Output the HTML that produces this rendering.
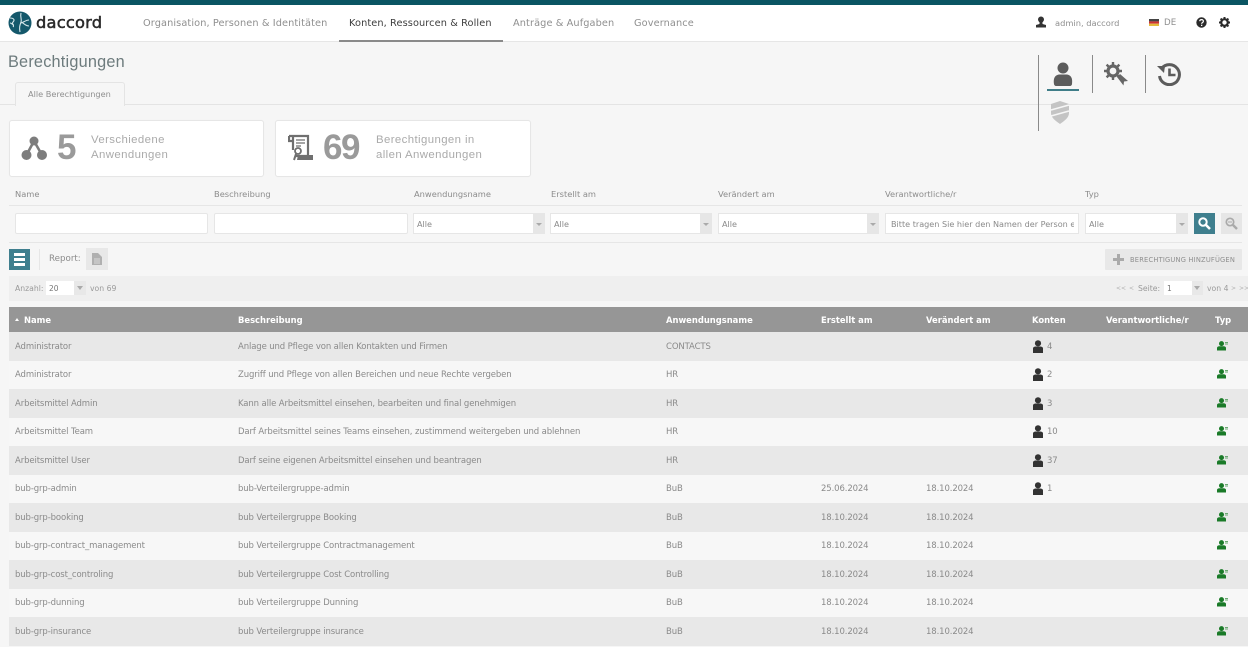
<!DOCTYPE html>
<html lang="de"><head><meta charset="utf-8"><title>Berechtigungen</title>
<style>
html,body{margin:0;padding:0}
body{width:1248px;height:647px;overflow:hidden;position:relative;background:#f6f6f6;font-family:"DejaVu Sans",sans-serif;color:#8a8a8a;font-size:9px}
.a,.t{position:absolute;white-space:nowrap}
.t{line-height:12px;transform:translateY(-5px)}
.nav{font-size:9.75px;color:#8f8f8f;letter-spacing:.1px}
.lbl{font-size:8.3px;color:#8c8c8c;top:193px}
.inp{position:absolute;top:213px;height:19px;background:#fff;border:1px solid #e6e6e6;border-radius:2px}
.sel{position:absolute;top:213px;height:21px;background:#fff;box-sizing:border-box;border:1px solid #e6e6e6;font-size:8.1px;color:#8a8a8a;line-height:21px;padding-left:3px}
.sel i{position:absolute;right:0;top:0;bottom:0;width:11px;background:#e6e6e6}
.sel i:after{content:"";position:absolute;left:3px;top:9px;border:3px solid transparent;border-top:3px solid #aaa}
.row{position:absolute;left:9px;width:1239px;height:28.5px}
.o{background:#e8e8e8}.e{background:#f7f7f7}
.c{font-size:8.5px;letter-spacing:-.12px;color:#8a8a8a}
.th{font-size:8.4px;font-weight:bold;color:#fff;top:319px}
.card{position:absolute;top:120px;height:55px;background:#fff;border:1px solid #e6e6e6;border-radius:3px;box-shadow:0 0 1px #eee}
.big{font-family:"Liberation Sans",sans-serif;font-weight:bold;font-size:35px;letter-spacing:-1.5px;color:#9a9a9a;line-height:40px}
.cap{font-family:"Liberation Sans",sans-serif;font-size:11.4px;color:#aaa;line-height:15px;letter-spacing:.4px}
.sep{position:absolute;width:1px;background:#8a8a8a}
.pg{font-size:7.7px;color:#9a9a9a;top:288px}
.ar{font-size:6px;color:#b0b0b0;top:288px}
</style></head><body>

<div class="a" style="left:0;top:0;width:1248px;height:5px;background:#0a5563"></div>
<div class="a" style="left:0;top:5px;width:1248px;height:36px;background:#fff"></div>
<div class="a" style="left:0;top:41px;width:1248px;height:1px;background:#e6e6e6"></div>

<svg class="a" style="left:8px;top:11px" width="24" height="24" viewBox="0 0 24 24"><circle cx="12" cy="12" r="11.500" fill="#14586b"/><path d="M2 7c4 0 5 2 3 4s2 3 0 5M2 12c2 0 2 2 4 2M13 2c-1 4 1 6 0 9s-2 5-1 10M13 12c3-1 5-3 8-3M13 11c3 1 4 4 8 4" fill="none" stroke="#d5e6ea" stroke-width="1.100"/></svg>
<div class="t" style="left:36px;top:23px;font-size:16.300px;line-height:22px;transform:translateY(-11px);color:#2a2a2a;letter-spacing:.2px;-webkit-text-stroke:.5px #2a2a2a">daccord</div>

<div class="t nav" style="left:143px;top:23px">Organisation, Personen &amp; Identitäten</div>
<div class="t nav" style="left:349px;top:23px;color:#3d3d3d">Konten, Ressourcen &amp; Rollen</div>
<div class="a" style="left:339px;top:40px;width:164px;height:2px;background:#8a8a8a"></div>
<div class="t nav" style="left:513px;top:23px">Anträge &amp; Aufgaben</div>
<div class="t nav" style="left:634px;top:23px">Governance</div>

<svg class="a" style="left:1035px;top:16px" width="12" height="12" viewBox="0 0 12 12"><circle cx="6" cy="3.500" r="3" fill="#333"/><path d="M4.500 6h3v2l3.500 1v2.500H1V9l3.500-1z" fill="#333"/></svg>
<div class="t" style="left:1055px;top:22px;font-size:8.300px;color:#8f8f8f">admin, daccord</div>
<svg class="a" style="left:1149px;top:19px" width="10" height="7" viewBox="0 0 10 7"><rect width="10" height="2.400" fill="#444"/><rect y="2.400" width="10" height="2.300" fill="#c33"/><rect y="4.700" width="10" height="2.300" fill="#e3b93c"/></svg>
<div class="t" style="left:1164px;top:22px;font-size:8.700px;color:#8f8f8f">DE</div>
<svg class="a" style="left:1196px;top:17px" width="11" height="11" viewBox="0 0 11 11"><circle cx="5.500" cy="5.500" r="5.200" fill="#2b2b2b"/><path d="M3.700 4.200c.2-2.200 3.800-2 3.700.1 0 1.300-1.800 1.300-1.800 2.400" fill="none" stroke="#fff" stroke-width="1.200"/><rect x="5" y="7.700" width="1.300" height="1.300" fill="#fff"/></svg>
<svg class="a" style="left:1219px;top:17px" width="11" height="11" viewBox="0 0 11 11"><circle cx="5.500" cy="5.500" r="3.300" fill="none" stroke="#2b2b2b" stroke-width="2.200"/><g stroke="#2b2b2b" stroke-width="2"><path d="M5.500 0v2M5.500 9v2M0 5.500h2M9 5.500h2M1.600 1.600l1.400 1.400M8 8l1.400 1.400M9.400 1.600L8 3M3 8L1.600 9.400"/></g></svg>

<div class="t" style="left:8px;top:62px;font-family:'Liberation Sans',sans-serif;font-size:16.300px;line-height:20px;transform:translateY(-10px);color:#6d7b7d;letter-spacing:.2px">Berechtigungen</div>

<div class="a" style="left:0;top:104px;width:1248px;height:1px;background:#e4e4e4"></div>
<div class="a" style="left:15px;top:82px;width:108px;height:23px;background:#f6f6f6;border:1px solid #e4e4e4;border-bottom:0;border-radius:3px 3px 0 0"></div>
<div class="t" style="left:28px;top:93px;font-size:8.200px;color:#8f8f8f">Alle Berechtigungen</div>

<div class="sep" style="left:1038px;top:55px;height:76px"></div>
<div class="sep" style="left:1092px;top:55px;height:38px"></div>
<div class="sep" style="left:1145px;top:55px;height:38px"></div>
<svg class="a" style="left:1053px;top:62px" width="20" height="25" viewBox="0 0 20 25"><circle cx="10" cy="6" r="5.500" fill="#5c5c5c"/><path d="M1 22c-1-7 2-9 5-9.500h8c3 .5 6 2.500 5 9.500 0 1-1 2-2 2H3c-1 0-2-1-2-2z" fill="#5c5c5c"/></svg>
<div class="a" style="left:1047px;top:89px;width:32px;height:2px;background:#3f7d88"></div>
<svg class="a" style="left:1104px;top:62px" width="24" height="24" viewBox="0 0 24 24"><circle cx="9" cy="9" r="5" fill="none" stroke="#666" stroke-width="3.200"/><g stroke="#666" stroke-width="2.400"><path d="M9 0v3M9 15v3M0 9h3M15 9h3M2.600 2.600l2 2M13.400 13.400l2 2M15.400 2.600l-2 2M4.600 13.400l-2 2"/></g><path d="M13 15l3-3 8 7-4 .5-.5 4z" fill="#666"/></svg>
<svg class="a" style="left:1157px;top:62px" width="24" height="24" viewBox="0 0 24 24"><path d="M4.500 6.500A10 10 0 1 1 2.500 14" fill="none" stroke="#5c5c5c" stroke-width="3"/><path d="M0 4l8 0 -1 7z" fill="#5c5c5c"/><path d="M12.500 6.500v6.500h6" fill="none" stroke="#5c5c5c" stroke-width="2.600"/></svg>
<svg class="a" style="left:1050px;top:101px" width="20" height="23" viewBox="0 0 20 23"><path d="M10 0l9 3v9c0 5-5 8-9 11-4-3-9-6-9-11V3z" fill="#c4c4c4"/><path d="M1 9l18-5M1 15l18-5" stroke="#f6f6f6" stroke-width="1.500"/></svg>

<div class="card" style="left:9px;width:253px"></div>
<div class="card" style="left:275px;width:254px"></div>
<svg class="a" style="left:21px;top:134px" width="26" height="28" viewBox="0 0 26 28"><path d="M13 7L5.500 21M13 7l8 14" stroke="#7d7d7d" stroke-width="2.600"/><circle cx="13" cy="7" r="4.500" fill="#7d7d7d"/><circle cx="5.500" cy="21" r="5" fill="#7d7d7d"/><circle cx="21" cy="21" r="5" fill="#7d7d7d"/></svg>
<div class="a big" style="left:57px;top:128px">5</div>
<div class="a cap" style="left:91px;top:133px">Verschiedene<br>Anwendungen</div>
<svg class="a" style="left:288px;top:134px" width="26" height="28" viewBox="0 0 26 28"><path d="M1 2h19v20H8M1 2v5h4M5 2v14" fill="none" stroke="#6f6f6f" stroke-width="2.200"/><path d="M8 6h9M8 9h9M8 12h5" stroke="#6f6f6f" stroke-width="1.300"/><circle cx="10" cy="17" r="3" fill="none" stroke="#6f6f6f" stroke-width="1.800"/><path d="M8 20l-2 6" stroke="#6f6f6f" stroke-width="2"/><path d="M10 21h15v5H9z" fill="#6f6f6f"/></svg>
<div class="a big" style="left:323px;top:128px">69</div>
<div class="a cap" style="left:376px;top:133px">Berechtigungen in<br>allen Anwendungen</div>

<div class="t lbl" style="left:15px">Name</div>
<div class="t lbl" style="left:214px">Beschreibung</div>
<div class="t lbl" style="left:414px">Anwendungsname</div>
<div class="t lbl" style="left:551px">Erstellt am</div>
<div class="t lbl" style="left:718px">Verändert am</div>
<div class="t lbl" style="left:885px">Verantwortliche/r</div>
<div class="t lbl" style="left:1085px">Typ</div>
<div class="a" style="left:9px;top:205px;width:1233px;height:1px;background:#e6e6e6"></div>

<div class="inp" style="left:15px;width:191px"></div>
<div class="inp" style="left:214px;width:192px"></div>
<div class="sel" style="left:413px;width:132px">Alle<i></i></div>
<div class="sel" style="left:550px;width:162px">Alle<i></i></div>
<div class="sel" style="left:718px;width:161px">Alle<i></i></div>
<div class="sel" style="left:885px;width:194px"><div style="width:183px;margin-left:2px;overflow:hidden;white-space:nowrap">Bitte tragen Sie hier den Namen der Person eingeben</div></div>
<div class="sel" style="left:1085px;width:103px">Alle<i></i></div>
<div class="a" style="left:1194px;top:213px;width:21px;height:21px;background:#3f7f8e"></div>
<svg class="a" style="left:1198px;top:217px" width="13" height="13" viewBox="0 0 13 13"><circle cx="5" cy="5" r="3.700" fill="none" stroke="#fff" stroke-width="2"/><path d="M8 8l4 4" stroke="#fff" stroke-width="2.600"/></svg>
<div class="a" style="left:1221px;top:213px;width:21px;height:21px;background:#e6e6e6"></div>
<svg class="a" style="left:1225px;top:217px" width="13" height="13" viewBox="0 0 13 13"><circle cx="5" cy="5" r="3.700" fill="none" stroke="#aaa" stroke-width="1.700"/><path d="M8 8l4 4" stroke="#aaa" stroke-width="2.400"/><path d="M3 5h4" stroke="#aaa"/></svg>
<div class="a" style="left:9px;top:242px;width:1233px;height:1px;background:#e6e6e6"></div>

<div class="a" style="left:9px;top:249px;width:21px;height:21px;background:#3f7f8e"></div>
<div class="a" style="left:14px;top:253px;width:11px;height:3px;background:#fff;box-shadow:0 5px 0 #fff,0 10px 0 #fff"></div>
<div class="a" style="left:39px;top:249px;width:1px;height:21px;background:#e6e6e6"></div>
<div class="t" style="left:49px;top:258px;font-size:8.700px;color:#8c8c8c">Report:</div>
<div class="a" style="left:86px;top:248px;width:22px;height:22px;background:#e8e8e8"></div>
<svg class="a" style="left:92px;top:253px" width="10" height="12" viewBox="0 0 10 12"><path d="M0 0h6l4 4v8H0z" fill="#b0b0b0"/><path d="M2 6h6M2 8h6M2 10h6" stroke="#e8e8e8" stroke-width=".8"/></svg>

<div class="a" style="left:1105px;top:249px;width:137px;height:21px;background:#e8e8e8;border-radius:1px"></div>
<div class="a" style="left:1113px;top:258px;width:11px;height:3px;background:#aaa"></div>
<div class="a" style="left:1117px;top:254px;width:3px;height:11px;background:#aaa"></div>
<div class="t" style="left:1130px;top:259px;font-size:6.700px;color:#8f8f8f;letter-spacing:.2px">BERECHTIGUNG HINZUFÜGEN</div>

<div class="a" style="left:9px;top:276px;width:1239px;height:25px;background:#efefef"></div>
<div class="t pg" style="left:15px">Anzahl:</div>
<div class="a" style="left:46px;top:281px;width:28px;height:14px;background:#fff"></div>
<div class="a" style="left:74px;top:281px;width:12px;height:14px;background:#e8e8e8"></div>
<div class="a" style="left:77px;top:286px;border:3px solid transparent;border-top:4px solid #aaa"></div>
<div class="t pg" style="left:49px;color:#777;font-size:7.500px">20</div>
<div class="t pg" style="left:90px">von 69</div>
<div class="t ar" style="left:1116px">&lt;&lt;</div>
<div class="t ar" style="left:1129px">&lt;</div>
<div class="t pg" style="left:1138px">Seite:</div>
<div class="a" style="left:1164px;top:281px;width:28px;height:14px;background:#fff"></div>
<div class="a" style="left:1192px;top:281px;width:11px;height:14px;background:#e8e8e8"></div>
<div class="a" style="left:1194px;top:286px;border:3px solid transparent;border-top:4px solid #aaa"></div>
<div class="t pg" style="left:1167px;color:#777;font-size:7.500px">1</div>
<div class="t pg" style="left:1207px">von 4</div>
<div class="t ar" style="left:1231px">&gt;</div>
<div class="t ar" style="left:1239px">&gt;&gt;</div>

<div class="a" style="left:9px;top:307px;width:1239px;height:25px;background:#969696"></div>
<div class="a" style="left:15px;top:318px;border:2.500px solid transparent;border-bottom:3px solid #fff;border-top:0"></div>
<div class="t th" style="left:24px">Name</div>
<div class="t th" style="left:238px">Beschreibung</div>
<div class="t th" style="left:666px">Anwendungsname</div>
<div class="t th" style="left:821px">Erstellt am</div>
<div class="t th" style="left:926px">Verändert am</div>
<div class="t th" style="left:1032px">Konten</div>
<div class="t th" style="left:1106px">Verantwortliche/r</div>
<div class="t th" style="left:1215px">Typ</div>

<div class="row o" style="top:332px"></div>
<div class="row e" style="top:360.500px"></div>
<div class="row o" style="top:389px"></div>
<div class="row e" style="top:417.500px"></div>
<div class="row o" style="top:446px"></div>
<div class="row e" style="top:474.500px"></div>
<div class="row o" style="top:503px"></div>
<div class="row e" style="top:531.500px"></div>
<div class="row o" style="top:560px"></div>
<div class="row e" style="top:588.500px"></div>
<div class="row o" style="top:617px"></div>

<div class="t c" style="left:15px;top:346px">Administrator</div><div class="t c" style="left:238px;top:346px">Anlage und Pflege von allen Kontakten und Firmen</div><div class="t c" style="left:666px;top:346px">CONTACTS</div><div class="t c" style="left:1047px;top:346px">4</div>
<div class="t c" style="left:15px;top:374px">Administrator</div><div class="t c" style="left:238px;top:374px">Zugriff und Pflege von allen Bereichen und neue Rechte vergeben</div><div class="t c" style="left:666px;top:374px">HR</div><div class="t c" style="left:1047px;top:374px">2</div>
<div class="t c" style="left:15px;top:403px">Arbeitsmittel Admin</div><div class="t c" style="left:238px;top:403px">Kann alle Arbeitsmittel einsehen, bearbeiten und final genehmigen</div><div class="t c" style="left:666px;top:403px">HR</div><div class="t c" style="left:1047px;top:403px">3</div>
<div class="t c" style="left:15px;top:431px">Arbeitsmittel Team</div><div class="t c" style="left:238px;top:431px">Darf Arbeitsmittel seines Teams einsehen, zustimmend weitergeben und ablehnen</div><div class="t c" style="left:666px;top:431px">HR</div><div class="t c" style="left:1047px;top:431px">10</div>
<div class="t c" style="left:15px;top:460px">Arbeitsmittel User</div><div class="t c" style="left:238px;top:460px">Darf seine eigenen Arbeitsmittel einsehen und beantragen</div><div class="t c" style="left:666px;top:460px">HR</div><div class="t c" style="left:1047px;top:460px">37</div>
<div class="t c" style="left:15px;top:488px">bub-grp-admin</div><div class="t c" style="left:238px;top:488px">bub-Verteilergruppe-admin</div><div class="t c" style="left:666px;top:488px">BuB</div><div class="t c" style="left:821px;top:488px">25.06.2024</div><div class="t c" style="left:926px;top:488px">18.10.2024</div><div class="t c" style="left:1047px;top:488px">1</div>
<div class="t c" style="left:15px;top:517px">bub-grp-booking</div><div class="t c" style="left:238px;top:517px">bub Verteilergruppe Booking</div><div class="t c" style="left:666px;top:517px">BuB</div><div class="t c" style="left:821px;top:517px">18.10.2024</div><div class="t c" style="left:926px;top:517px">18.10.2024</div>
<div class="t c" style="left:15px;top:545px">bub-grp-contract_management</div><div class="t c" style="left:238px;top:545px">bub Verteilergruppe Contractmanagement</div><div class="t c" style="left:666px;top:545px">BuB</div><div class="t c" style="left:821px;top:545px">18.10.2024</div><div class="t c" style="left:926px;top:545px">18.10.2024</div>
<div class="t c" style="left:15px;top:574px">bub-grp-cost_controling</div><div class="t c" style="left:238px;top:574px">bub Verteilergruppe Cost Controlling</div><div class="t c" style="left:666px;top:574px">BuB</div><div class="t c" style="left:821px;top:574px">18.10.2024</div><div class="t c" style="left:926px;top:574px">18.10.2024</div>
<div class="t c" style="left:15px;top:602px">bub-grp-dunning</div><div class="t c" style="left:238px;top:602px">bub Verteilergruppe Dunning</div><div class="t c" style="left:666px;top:602px">BuB</div><div class="t c" style="left:821px;top:602px">18.10.2024</div><div class="t c" style="left:926px;top:602px">18.10.2024</div>
<div class="t c" style="left:15px;top:631px">bub-grp-insurance</div><div class="t c" style="left:238px;top:631px">bub Verteilergruppe insurance</div><div class="t c" style="left:666px;top:631px">BuB</div><div class="t c" style="left:821px;top:631px">18.10.2024</div><div class="t c" style="left:926px;top:631px">18.10.2024</div>

<svg width="0" height="0" style="position:absolute"><defs>
<g id="p"><circle cx="5" cy="3.300" r="3.100" fill="#333"/><path d="M0 13V8.500C0 7 1.500 6.500 3 6.500h4c1.500 0 3 .5 3 2V13z" fill="#333"/></g>
<g id="g"><circle cx="4.500" cy="2.600" r="2.500" fill="#1a7a28"/><path d="M0 9.500V7c0-1 1-1.700 2.500-1.700h4C8 5.300 9 6 9 7v2.500z" fill="#1a7a28"/><path d="M8 1.500h3M8 3h3" stroke="#6aa872" stroke-width="1"/></g>
</defs></svg>
<svg class="a" style="left:1033px;top:340px" width="10" height="13"><use href="#p"/></svg>
<svg class="a" style="left:1033px;top:368px" width="10" height="13"><use href="#p"/></svg>
<svg class="a" style="left:1033px;top:397px" width="10" height="13"><use href="#p"/></svg>
<svg class="a" style="left:1033px;top:425px" width="10" height="13"><use href="#p"/></svg>
<svg class="a" style="left:1033px;top:454px" width="10" height="13"><use href="#p"/></svg>
<svg class="a" style="left:1033px;top:482px" width="10" height="13"><use href="#p"/></svg>
<svg class="a" style="left:1217px;top:341px" width="12" height="10"><use href="#g"/></svg>
<svg class="a" style="left:1217px;top:369px" width="12" height="10"><use href="#g"/></svg>
<svg class="a" style="left:1217px;top:398px" width="12" height="10"><use href="#g"/></svg>
<svg class="a" style="left:1217px;top:426px" width="12" height="10"><use href="#g"/></svg>
<svg class="a" style="left:1217px;top:455px" width="12" height="10"><use href="#g"/></svg>
<svg class="a" style="left:1217px;top:483px" width="12" height="10"><use href="#g"/></svg>
<svg class="a" style="left:1217px;top:512px" width="12" height="10"><use href="#g"/></svg>
<svg class="a" style="left:1217px;top:540px" width="12" height="10"><use href="#g"/></svg>
<svg class="a" style="left:1217px;top:569px" width="12" height="10"><use href="#g"/></svg>
<svg class="a" style="left:1217px;top:597px" width="12" height="10"><use href="#g"/></svg>
<svg class="a" style="left:1217px;top:626px" width="12" height="10"><use href="#g"/></svg>
</body></html>
